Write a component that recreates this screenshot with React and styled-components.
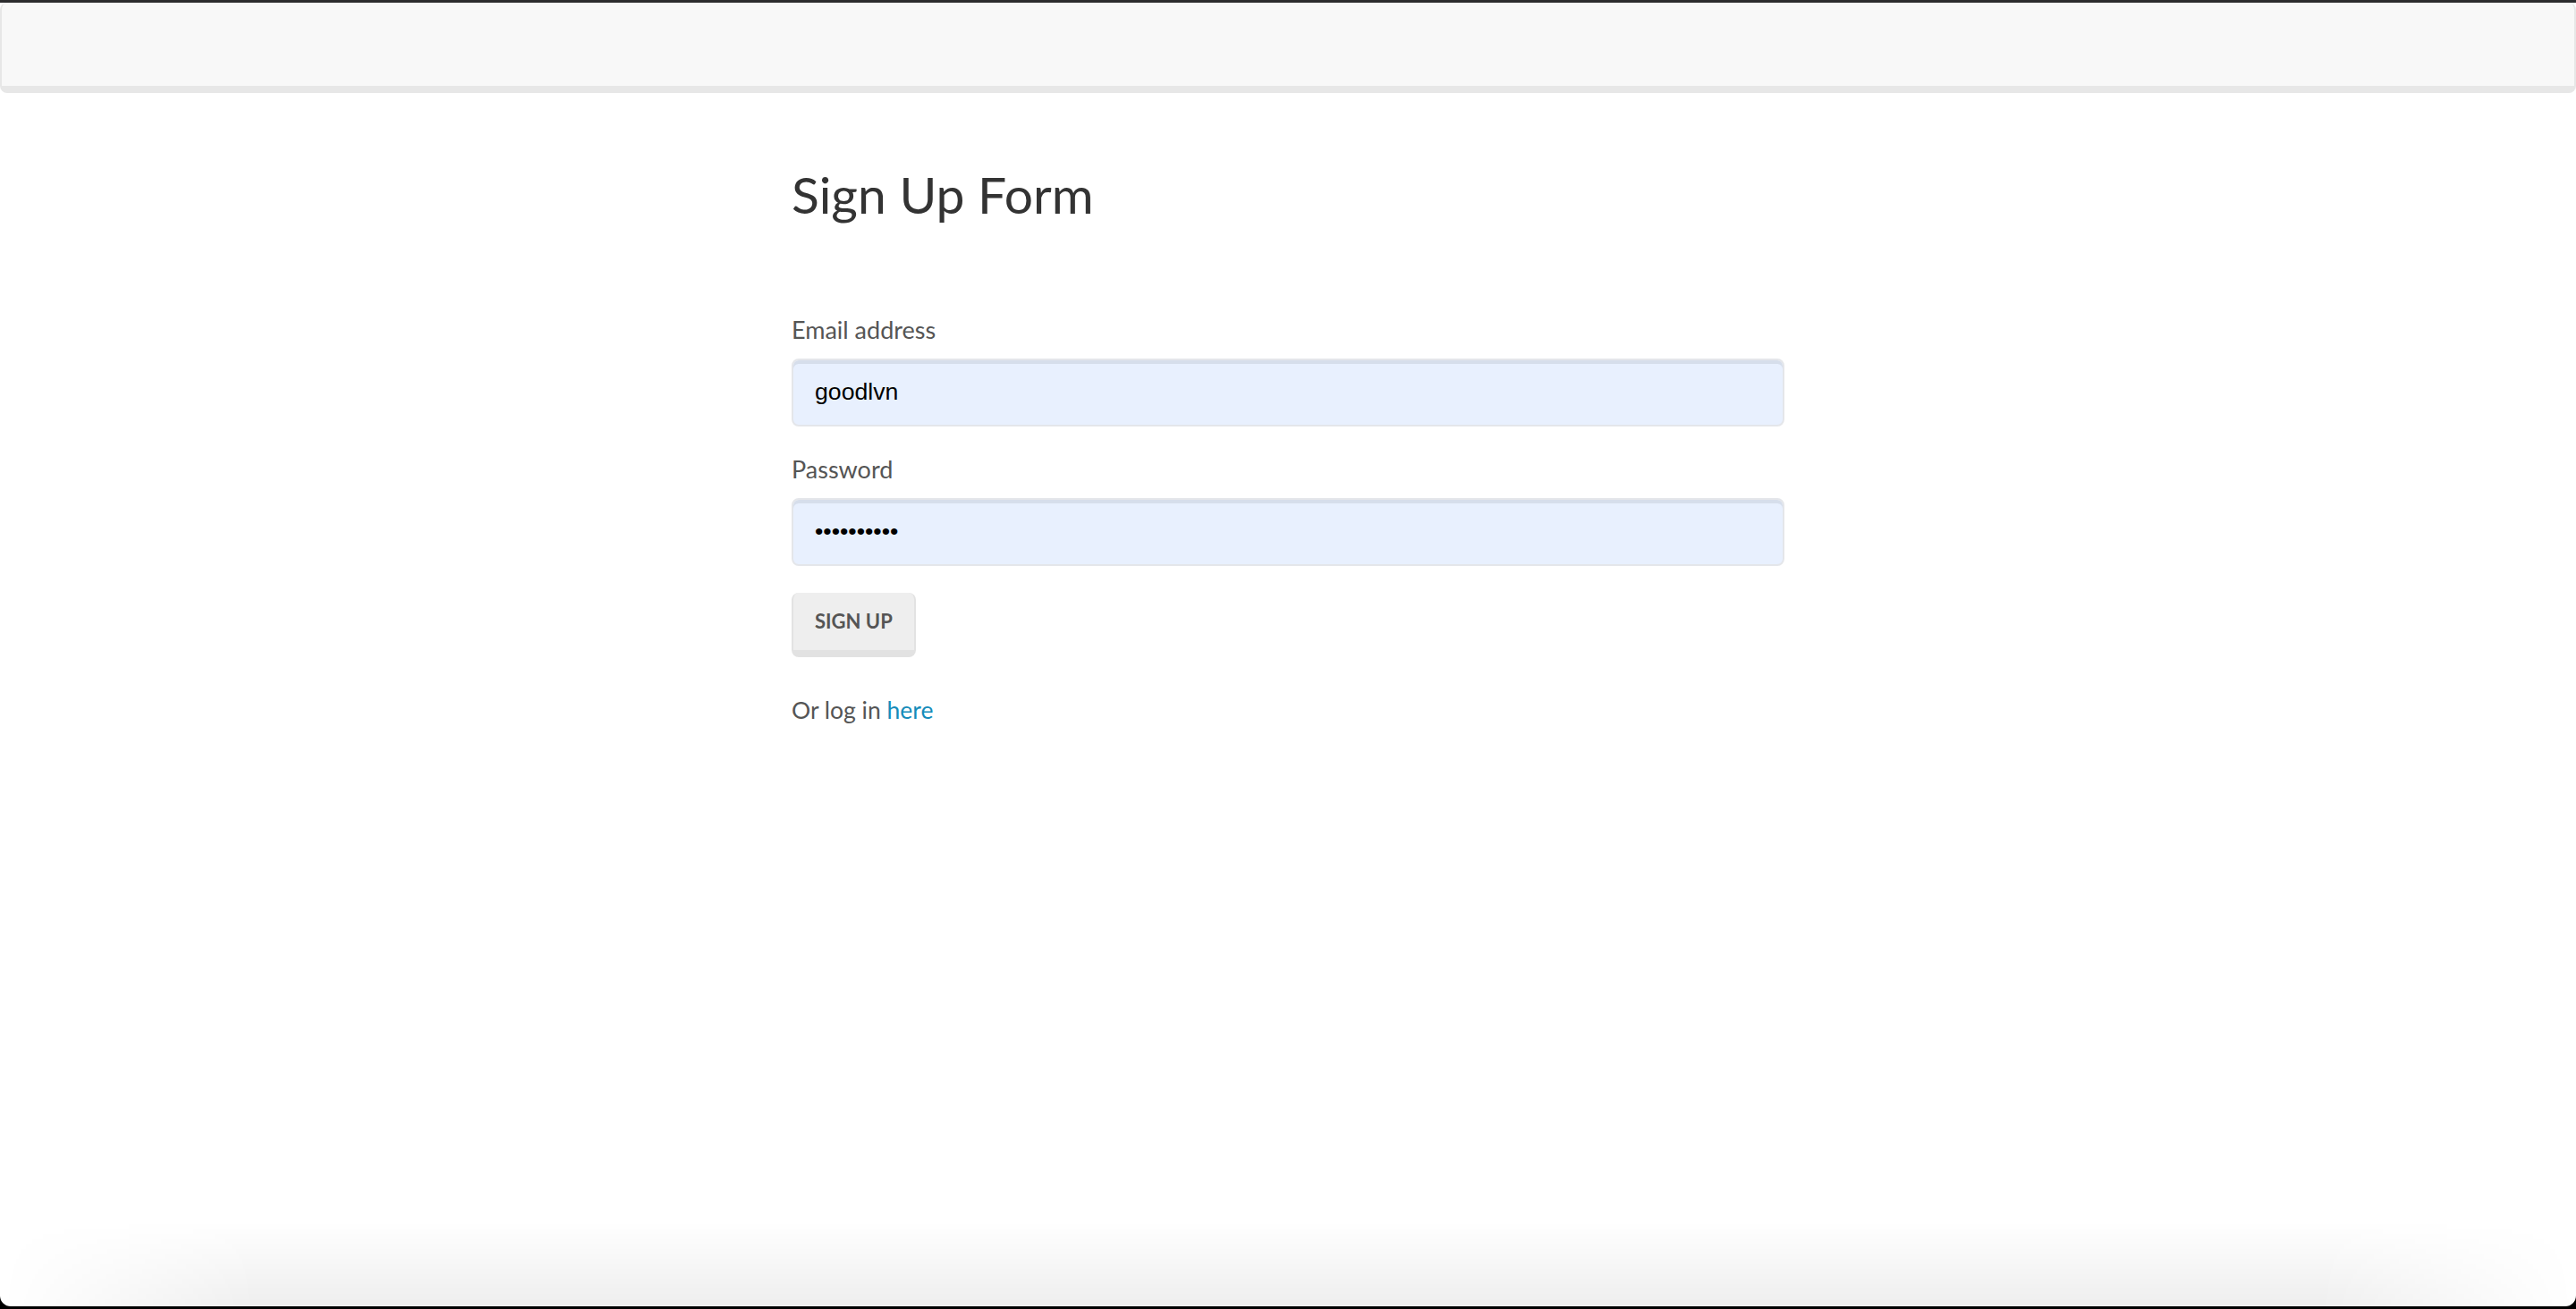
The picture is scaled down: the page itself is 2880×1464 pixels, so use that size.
import React from "react";
import styled, { createGlobalStyle } from "styled-components";

const Global = createGlobalStyle`
  html, body { margin: 0; padding: 0; background: #000; }
  body { font-family: "Lato", "Liberation Sans", sans-serif; }
  * { box-sizing: border-box; }
`;

const Screen = styled.div`
  width: 2880px;
  height: 1464px;
  display: flex;
  flex-direction: column;
  background: #000;
`;

const TitleStrip = styled.div`
  height: 3px;
  flex: none;
  background: #2c2c2e;
`;

const Page = styled.div`
  height: 1458px;
  flex: none;
  display: flex;
  flex-direction: column;
  background: #ffffff;
  border-radius: 0 0 12px 12px;
  overflow: hidden;
`;

const Navbar = styled.nav`
  flex: none;
  height: 101px;
  background: #f8f8f8;
  border-style: solid;
  border-color: #e7e7e7;
  border-width: 0 2px 8px 2px;
  border-radius: 8px;
`;

const Main = styled.main`
  flex: 1;
  display: flex;
  justify-content: center;
`;

const Column = styled.div`
  width: 1110px;
  display: flex;
  flex-direction: column;
  align-items: flex-start;
  padding-top: 82px;
`;

const Heading = styled.h2`
  margin: 0 0 100px;
  font-family: "Lato", sans-serif;
  font-weight: 400;
  font-size: 57px;
  line-height: 62.7px;
  color: #333333;
`;

const Form = styled.form`
  width: 100%;
  display: flex;
  flex-direction: column;
  align-items: flex-start;
`;

const Group = styled.div`
  width: 100%;
  display: flex;
  flex-direction: column;
  margin-bottom: 28px;
`;

const Label = styled.label`
  font-size: 27px;
  line-height: 40px;
  color: #555555;
  margin-bottom: 12px;
`;

const Field = styled.input`
  width: 100%;
  height: 76px;
  padding: 0 24px;
  border: 2px solid #e4e6ea;
  border-radius: 8px;
  background: #e8f0fe;
  box-shadow: inset 0 4px 0 rgba(0, 0, 0, 0.075);
  font-family: "Liberation Sans", Arial, sans-serif;
  font-size: 26.67px;
  color: #000;
  outline: none;
`;

const Button = styled.button`
  margin-top: 2px;
  height: 72px;
  padding: 0 24px;
  background: #eeeeee;
  border-style: solid;
  border-color: #e2e2e2;
  border-width: 0 2px 8px 2px;
  border-radius: 8px;
  font-family: "Lato", sans-serif;
  font-weight: 700;
  font-size: 22px;
  color: #555555;
  text-transform: uppercase;
  cursor: pointer;
`;

const Note = styled.p`
  margin: 39px 0 0;
  font-size: 26.5px;
  line-height: 40px;
  color: #555555;
`;

const Link = styled.a`
  color: #158cba;
  text-decoration: none;
`;

const Shade = styled.div`
  flex: none;
  height: 95px;
  background: linear-gradient(to bottom, rgba(0, 0, 0, 0), rgba(0, 0, 0, 0.065));
  -webkit-mask-image: linear-gradient(to right, transparent 0%, #000 10%, #000 90%, transparent 100%);
  mask-image: linear-gradient(to right, transparent 0%, #000 10%, #000 90%, transparent 100%);
`;

export default function App() {
  return (
    <>
      <Global />
      <Screen>
        <TitleStrip />
        <Page>
          <Navbar />
          <Main>
            <Column>
              <Heading>Sign Up Form</Heading>
              <Form onSubmit={(e) => e.preventDefault()}>
                <Group>
                  <Label htmlFor="email">Email address</Label>
                  <Field id="email" type="text" defaultValue="goodlvn" readOnly />
                </Group>
                <Group>
                  <Label htmlFor="password">Password</Label>
                  <Field id="password" type="password" defaultValue="1234567890" readOnly />
                </Group>
                <Button type="submit">Sign Up</Button>
              </Form>
              <Note>
                Or log in <Link href="#">here</Link>
              </Note>
            </Column>
          </Main>
          <Shade />
        </Page>
      </Screen>
    </>
  );
}
